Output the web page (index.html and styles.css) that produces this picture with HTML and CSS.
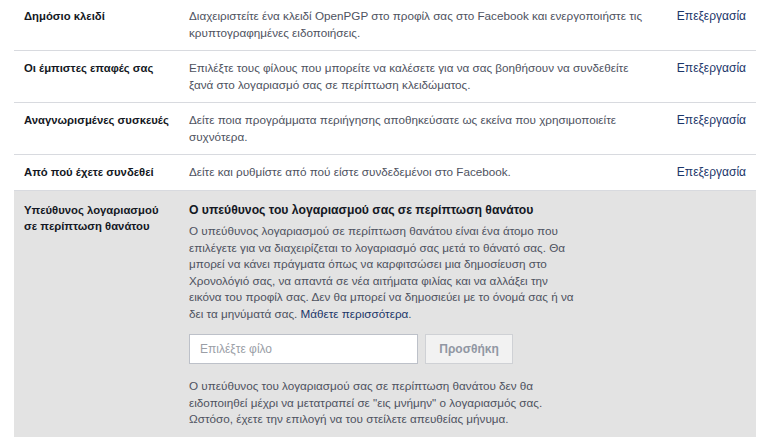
FILE: index.html
```html
<!DOCTYPE html>
<html lang="el">
<head>
  <meta charset="utf-8">
  <title>Ασφάλεια</title>
  <link rel="stylesheet" href="styles.css">
</head>
<body>
  <div class="settings">
    <div class="row">
      <div class="row-label">Δημόσιο κλειδί</div>
      <div class="row-desc"><span class="keep">Διαχειριστείτε ένα κλειδί OpenPGP στο προφίλ σας στο Facebook και ενεργοποιήστε τις</span> κρυπτογραφημένες ειδοποιήσεις.</div>
      <a class="row-edit" href="#">Επεξεργασία</a>
    </div>
    <div class="row">
      <div class="row-label">Οι έμπιστες επαφές σας</div>
      <div class="row-desc">Επιλέξτε τους φίλους που μπορείτε να καλέσετε για να σας βοηθήσουν να συνδεθείτε ξανά στο λογαριασμό σας σε περίπτωση κλειδώματος.</div>
      <a class="row-edit" href="#">Επεξεργασία</a>
    </div>
    <div class="row">
      <div class="row-label">Αναγνωρισμένες συσκευές</div>
      <div class="row-desc">Δείτε ποια προγράμματα περιήγησης αποθηκεύσατε ως εκείνα που χρησιμοποιείτε συχνότερα.</div>
      <a class="row-edit" href="#">Επεξεργασία</a>
    </div>
    <div class="row">
      <div class="row-label">Από πού έχετε συνδεθεί</div>
      <div class="row-desc">Δείτε και ρυθμίστε από πού είστε συνδεδεμένοι στο Facebook.</div>
      <a class="row-edit" href="#">Επεξεργασία</a>
    </div>
    <div class="row open">
      <div class="row-label">Υπεύθυνος λογαριασμού σε περίπτωση θανάτου</div>
      <div class="panel">
        <h3>Ο υπεύθυνος του λογαριασμού σας σε περίπτωση θανάτου</h3>
        <p>Ο υπεύθυνος λογαριασμού σε περίπτωση θανάτου είναι ένα άτομο που επιλέγετε για να διαχειρίζεται το λογαριασμό σας μετά το θάνατό σας. Θα μπορεί να κάνει πράγματα όπως να καρφιτσώσει μια δημοσίευση στο Χρονολόγιό σας, να απαντά σε νέα αιτήματα φιλίας και να αλλάξει την εικόνα του προφίλ σας. Δεν θα μπορεί να δημοσιεύει με το όνομά σας ή να δει τα μηνύματά σας. <a href="#">Μάθετε περισσότερα</a>.</p>
        <div class="picker">
          <input type="text" placeholder="Επιλέξτε φίλο">
          <button disabled>Προσθήκη</button>
        </div>
        <p>Ο υπεύθυνος του λογαριασμού σας σε περίπτωση θανάτου δεν θα ειδοποιηθεί μέχρι να μετατραπεί σε "εις μνήμην" ο λογαριασμός σας. Ωστόσο, έχετε την επιλογή να του στείλετε απευθείας μήνυμα.</p>
      </div>
    </div>
  </div>
</body>
</html>
```

FILE: styles.css
```css
body {
  font-family: "Liberation Sans", Arial, sans-serif;
  font-size: 11.7px;
  line-height: 16.5px;
  color: #4e5260;
  background-color: #fff;
  margin: 0;
  padding: 0;
}

.settings {
  width: 742px;
  margin-left: 14px;
}

.row {
  display: grid;
  grid-template-columns: 165px 462px 1fr;
  padding: 9px 10px;
  border-bottom: 1px solid #d8dadf;
}

.row:first-child {
  padding-top: 8px;
}

.row-label {
  font-size: 11.3px;
  font-weight: bold;
  color: #141823;
}

.keep {
  white-space: nowrap;
}

.row-edit {
  justify-self: end;
  font-size: 12px;
  color: #1c3669;
  text-decoration: none;
}

.row.open {
  background-color: #e3e3e3;
  border-bottom: none;
  padding-top: 11px;
  padding-bottom: 20px;
}

.row.open .row-label {
  padding-right: 22px;
}

.panel {
  width: 390px;
}

.panel h3 {
  margin: 0 0 5px;
  font-size: 12.2px;
  white-space: nowrap;
  color: #141823;
}

.panel p {
  margin: 0;
}

.panel a {
  color: #1c3669;
  text-decoration: none;
}

.picker {
  display: flex;
  gap: 7px;
  margin: 12px 0 14px;
}

.picker input {
  flex: none;
  width: 229px;
  height: 30px;
  box-sizing: border-box;
  padding: 0 10px;
  border: 1px solid #bdc1c9;
  font-family: inherit;
  font-size: 12px;
}

.picker input::placeholder {
  color: #9a9ea6;
}

.picker button {
  flex: none;
  width: 88px;
  height: 30px;
  background-color: #f2f2f2;
  border: 1px solid #cfd1d5;
  color: #9197a3;
  font-family: inherit;
  font-size: 12px;
  font-weight: bold;
}
```
